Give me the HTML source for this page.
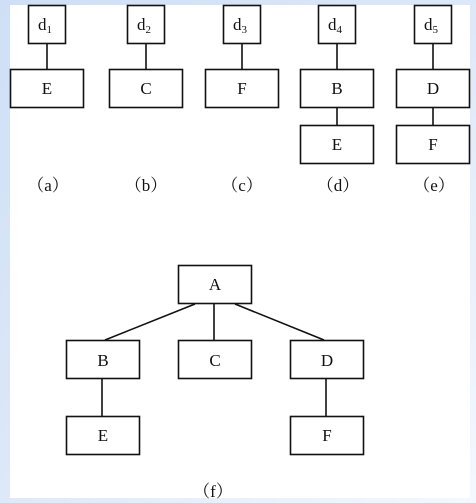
<!DOCTYPE html>
<html><head><style>
html,body{margin:0;padding:0;width:476px;height:503px;overflow:hidden;background:linear-gradient(135deg,#cfdff6 0%,#dde8f9 50%,#f4f8fe 100%);}
svg{position:absolute;left:0;top:0;}
text{font-family:"Liberation Serif","Noto Serif CJK SC",serif;font-size:17px;fill:#111;}
</style></head><body>
<svg width="476" height="503" viewBox="0 0 476 503">
<rect x="10" y="5" width="460" height="493" fill="#fff"/>
<g fill="none" stroke="#111" stroke-width="1.6">
<rect x="28.5" y="5.5" width="37" height="38"/><line x1="47" y1="43" x2="47" y2="69"/><rect x="10.5" y="69.5" width="73" height="38"/>
<rect x="127.5" y="5.5" width="37" height="38"/><line x1="146" y1="43" x2="146" y2="69"/><rect x="109.5" y="69.5" width="73" height="38"/>
<rect x="223.5" y="5.5" width="37" height="38"/><line x1="242" y1="43" x2="242" y2="69"/><rect x="205.5" y="69.5" width="73" height="38"/>
<rect x="318.5" y="5.5" width="37" height="38"/><line x1="337" y1="43" x2="337" y2="69"/><rect x="300.5" y="69.5" width="73" height="38"/><line x1="337" y1="107" x2="337" y2="125"/><rect x="300.5" y="125.5" width="73" height="38"/>
<rect x="414.5" y="5.5" width="37" height="38"/><line x1="433" y1="43" x2="433" y2="69"/><rect x="396.5" y="69.5" width="73" height="38"/><line x1="433" y1="107" x2="433" y2="125"/><rect x="396.5" y="125.5" width="73" height="38"/>
<rect x="178.5" y="265.5" width="73" height="38"/>
<rect x="66.5" y="340.5" width="73" height="38"/>
<rect x="178.5" y="340.5" width="73" height="38"/>
<rect x="290.5" y="340.5" width="73" height="38"/>
<rect x="66.5" y="416.5" width="73" height="38"/>
<rect x="290.5" y="416.5" width="73" height="38"/>
<line x1="195" y1="304" x2="105" y2="340"/>
<line x1="214" y1="304" x2="214" y2="340"/>
<line x1="235" y1="304" x2="324" y2="340"/>
<line x1="102" y1="379" x2="102" y2="416"/>
<line x1="326" y1="379" x2="326" y2="416"/>
</g>
<g text-anchor="middle">
<text x="45" y="30">d<tspan font-size="11" dy="3">1</tspan></text>
<text x="144" y="30">d<tspan font-size="11" dy="3">2</tspan></text>
<text x="240" y="30">d<tspan font-size="11" dy="3">3</tspan></text>
<text x="335" y="30">d<tspan font-size="11" dy="3">4</tspan></text>
<text x="431" y="30">d<tspan font-size="11" dy="3">5</tspan></text>
<text x="47" y="94">E</text><text x="146" y="94">C</text><text x="242" y="94">F</text>
<text x="337" y="94">B</text><text x="337" y="150">E</text>
<text x="433" y="94">D</text><text x="433" y="150">F</text>
<text x="48" y="191">（a）</text><text x="146" y="191">（b）</text><text x="242" y="191">（c）</text><text x="338" y="191">（d）</text><text x="434" y="191">（e）</text>
<text x="215" y="290">A</text>
<text x="103" y="366">B</text><text x="215" y="366">C</text><text x="327" y="366">D</text>
<text x="103" y="441">E</text><text x="327" y="441">F</text>
<text x="213" y="497">（f）</text>
</g>
</svg>
</body></html>
